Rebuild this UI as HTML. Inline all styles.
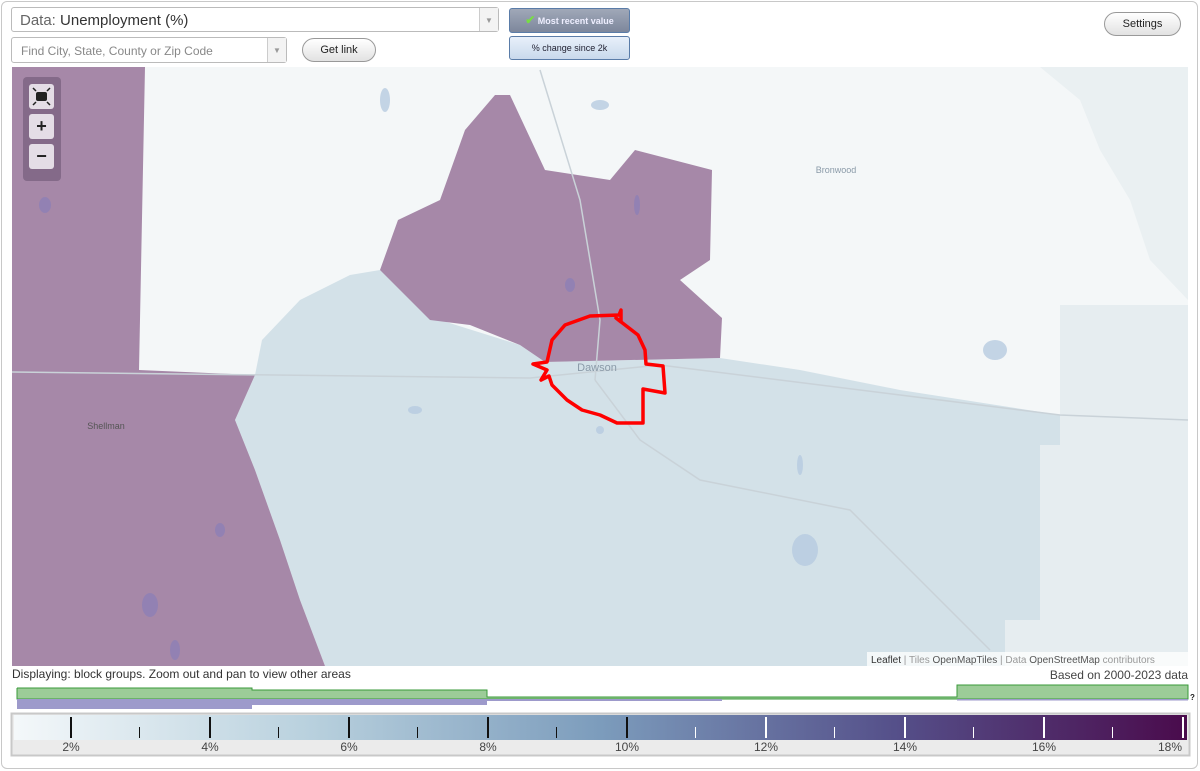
<!DOCTYPE html>
<html><head><meta charset="utf-8"><style>
body{margin:0;width:1200px;height:771px;background:#fff;font-family:"Liberation Sans",sans-serif;position:relative;overflow:hidden}
.frame{position:absolute;left:1px;top:1px;width:1195px;height:766px;border:1px solid #c8c8c8;border-radius:6px}
.sel{position:absolute;border:1px solid #bbb;border-radius:3px;background:#fff;color:#555}
.arr{position:absolute;right:0;top:0;bottom:0;width:18px;border-left:1px solid #ccc;background:#f3f3f3;color:#999;font-size:8px;text-align:center}
.btn{position:absolute;border:1px solid #999;border-radius:12px;background:linear-gradient(#fff,#e2e2e2);font-size:11px;text-align:center;color:#222}
.tog{position:absolute;border:1px solid #5a7ca8;border-radius:3px;font-size:9px;text-align:center}
.zc{position:absolute;left:23px;top:77px;width:38px;height:104px;background:rgba(90,70,100,.45);border-radius:4px}
.zb{position:absolute;left:6px;width:25px;height:25px;background:#e4dde6;border-radius:3px;text-align:center;font-weight:bold;font-size:18px;line-height:25px;color:#222}
.tick{position:absolute;top:717px;width:2px}
.lab{position:absolute;top:740px;font-size:12px;color:#444;width:40px;margin-left:-20px;text-align:center}
</style></head><body>
<div class="frame"></div>
<div class="sel" style="left:11px;top:7px;width:488px;height:25px;font-size:15px;line-height:25px;padding-left:8px;box-sizing:border-box"><span style="color:#666">Data:</span> <span style="color:#333">Unemployment (%)</span><div class="arr" style="line-height:25px">▼</div></div>
<div class="sel" style="left:11px;top:37px;width:276px;height:26px;font-size:12px;line-height:26px;padding-left:9px;box-sizing:border-box;color:#888">Find City, State, County or Zip Code<div class="arr" style="line-height:26px">▼</div></div>
<div class="btn" style="left:302px;top:38px;width:72px;height:22px;line-height:22px">Get link</div>
<div class="tog" style="left:509px;top:8px;width:119px;height:23px;line-height:23px;background:linear-gradient(#a0a8b8,#7d879c);color:#eef;font-weight:bold"><span style="color:#7d4;font-size:12px">✔</span> Most recent value</div>
<div class="tog" style="left:509px;top:36px;width:119px;height:22px;line-height:22px;background:linear-gradient(#e8f0fa,#c9d9ec);color:#223">% change since 2k</div>
<div class="btn" style="left:1104px;top:12px;width:75px;height:22px;line-height:22px">Settings</div>

<svg style="position:absolute;left:0;top:0" width="1200" height="771">
<rect x="12" y="67" width="1176" height="599" fill="#f4f7f8"/>
<polygon points="1060,305 1188,305 1188,666 1005,666 1005,620 1040,620 1040,445 1060,445" fill="#e6edf0"/>
<polygon points="1040,67 1188,67 1188,300 1150,260 1130,200 1100,150 1080,100" fill="#eaf0f2"/>
<polygon points="255,375 262,340 300,300 350,275 380,270 440,320 520,345 545,362 720,358 800,370 900,390 1060,415 1060,445 1040,445 1040,620 1005,620 1005,666 325,666 300,600 280,540 255,470 235,420" fill="#d3e1e8"/>
<polygon points="12,67 145,67 139,370 255,375 235,420 255,470 280,540 300,600 325,666 12,666" fill="#a688a8"/>
<polygon points="380,270 398,220 440,200 465,130 495,95 510,95 545,170 610,180 635,150 712,170 710,260 680,280 722,318 720,358 545,362 520,345 470,325 430,320" fill="#a688a8"/>
<g fill="#8a7fb8" opacity=".7"><ellipse cx="150" cy="605" rx="8" ry="12"/><ellipse cx="175" cy="650" rx="5" ry="10"/><ellipse cx="45" cy="205" rx="6" ry="8"/><ellipse cx="220" cy="530" rx="5" ry="7"/><ellipse cx="637" cy="205" rx="3" ry="10"/><ellipse cx="570" cy="285" rx="5" ry="7"/></g>
<g fill="#b6cbe0" opacity=".8"><ellipse cx="805" cy="550" rx="13" ry="16"/><ellipse cx="995" cy="350" rx="12" ry="10"/><ellipse cx="415" cy="410" rx="7" ry="4"/><ellipse cx="800" cy="465" rx="3" ry="10"/><ellipse cx="600" cy="430" rx="4" ry="4"/><ellipse cx="385" cy="100" rx="5" ry="12"/><ellipse cx="600" cy="105" rx="9" ry="5"/></g>
<g stroke="#c9d2d8" fill="none" stroke-width="1.5"><path d="M12,372 L530,378 L660,365 L900,395 L1060,415 L1188,420"/><path d="M595,380 L640,440 L700,480 L850,510 L900,560 L990,650"/><path d="M540,70 L580,200 L600,320 L595,380"/></g>
<polygon points="533,364 547,362 552,340 565,325 590,316 619,315 621,310 621,322 616,318 638,335 645,350 646,364 663,366 665,393 643,389 643,423 617,423 600,415 582,410 567,400 552,385 549,376 541,380 547,370" fill="none" stroke="#f00" stroke-width="3.5" stroke-linejoin="round"/>
<text x="597" y="371" font-size="11" fill="#8a9aa8" text-anchor="middle" font-family="Liberation Sans">Dawson</text>
<text x="836" y="173" font-size="9" fill="#8a9aa8" text-anchor="middle" font-family="Liberation Sans">Bronwood</text>
<text x="106" y="429" font-size="9" fill="#555" text-anchor="middle" font-family="Liberation Sans">Shellman</text>
<rect x="867" y="652" width="321" height="14" fill="rgba(255,255,255,.75)"/>
<text x="871" y="663" font-size="10" fill="#999" font-family="Liberation Sans"><tspan fill="#333">Leaflet</tspan> | Tiles <tspan fill="#555">OpenMapTiles</tspan> | Data <tspan fill="#555">OpenStreetMap</tspan> contributors</text>
<polyline points="17,688 252,688 252,690 487,690 487,697 957,697 957,685 1188,685 1188,699 17,699 17,688" fill="#9ccc98" stroke="#3a9a3a" stroke-width="1"/>
<rect x="17" y="699" width="235" height="10" fill="#9d9acb"/><rect x="252" y="699" width="235" height="6" fill="#9d9acb"/><rect x="487" y="699" width="235" height="2" fill="#9d9acb"/><rect x="957" y="699" width="231" height="1.5" fill="#9d9acb"/>
<text x="1190" y="700" font-size="8" font-weight="bold" fill="#222">?</text>
<defs><linearGradient id="g" x1="0" x2="1"><stop offset="0" stop-color="#f4f8fa"/><stop offset=".25" stop-color="#b9d1de"/><stop offset=".5" stop-color="#7c9cbc"/><stop offset=".75" stop-color="#55508a"/><stop offset="1" stop-color="#4a0b4c"/></linearGradient></defs>
<rect x="11.5" y="713.5" width="1178" height="42" fill="#ebebeb" stroke="#c8c8c8" stroke-width="2"/>
<rect x="14" y="715" width="1173" height="25" fill="url(#g)"/>
<rect x="34" y="89" width="15" height="12" rx="3" fill="#222"/>
</svg>
<div class="tick" style="left:70px;height:21px;background:#111"></div>
<div class="tick" style="left:139px;top:727px;height:11px;width:1px;background:#111"></div>
<div class="tick" style="left:209px;height:21px;background:#111"></div>
<div class="tick" style="left:278px;top:727px;height:11px;width:1px;background:#111"></div>
<div class="tick" style="left:348px;height:21px;background:#111"></div>
<div class="tick" style="left:417px;top:727px;height:11px;width:1px;background:#111"></div>
<div class="tick" style="left:487px;height:21px;background:#111"></div>
<div class="tick" style="left:556px;top:727px;height:11px;width:1px;background:#111"></div>
<div class="tick" style="left:626px;height:21px;background:#111"></div>
<div class="tick" style="left:695px;top:727px;height:11px;width:1px;background:#fff"></div>
<div class="tick" style="left:765px;height:21px;background:#fff"></div>
<div class="tick" style="left:834px;top:727px;height:11px;width:1px;background:#fff"></div>
<div class="tick" style="left:904px;height:21px;background:#fff"></div>
<div class="tick" style="left:973px;top:727px;height:11px;width:1px;background:#fff"></div>
<div class="tick" style="left:1043px;height:21px;background:#fff"></div>
<div class="tick" style="left:1112px;top:727px;height:11px;width:1px;background:#fff"></div>
<div class="tick" style="left:1182px;height:21px;background:#fff"></div>
<div class="lab" style="left:71px">2%</div><div class="lab" style="left:210px">4%</div><div class="lab" style="left:349px">6%</div><div class="lab" style="left:488px">8%</div><div class="lab" style="left:627px">10%</div><div class="lab" style="left:766px">12%</div><div class="lab" style="left:905px">14%</div><div class="lab" style="left:1044px">16%</div><div class="lab" style="left:1170px">18%</div>
<div style="position:absolute;left:12px;top:667px;font-size:12px;color:#333">Displaying: block groups. Zoom out and pan to view other areas</div>
<div style="position:absolute;right:12px;top:668px;font-size:12px;color:#444">Based on 2000-2023 data</div>
<div class="zc"><div class="zb" style="top:7px"></div><div class="zb" style="top:37px">+</div><div class="zb" style="top:67px">−</div></div>
<svg style="position:absolute;left:29px;top:84px" width="25" height="25"><rect x="7" y="8" width="11" height="9" rx="2" fill="#222"/><g stroke="#222" stroke-width="1.5"><path d="M4,4 l3,3 M21,4 l-3,3 M4,21 l3,-3 M21,21 l-3,-3"/></g></svg>
</body></html>
